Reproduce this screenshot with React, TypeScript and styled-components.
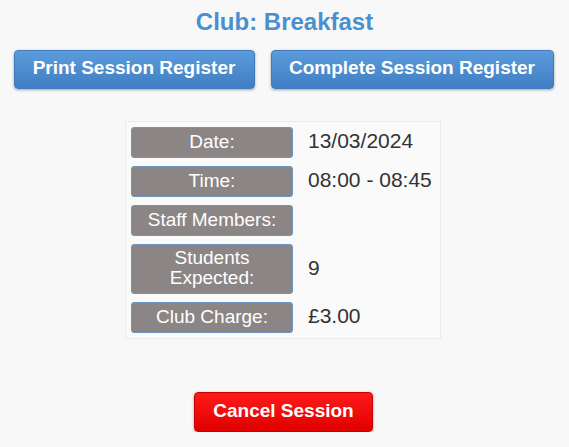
import React from "react";
import styled, { createGlobalStyle } from "styled-components";

const Global = createGlobalStyle`
  html, body { margin: 0; padding: 0; background: #f8f8f8; }
  body { font-family: "Liberation Sans", Arial, sans-serif; }
`;

const Page = styled.div`
  display: flex;
  flex-direction: column;
  align-items: center;
  padding-top: 8px;
`;

const Title = styled.h1`
  margin: 0;
  font-size: 24px;
  line-height: 28px;
  font-weight: bold;
  color: #4a8fd0;
`;

const ButtonRow = styled.div`
  display: flex;
  gap: 16px;
  margin-top: 14px;
  margin-left: -2px;
`;

const Button = styled.button<{ $variant?: "blue" | "red"; $w: number }>`
  width: ${(p) => p.$w}px;
  height: ${(p) => (p.$variant === "red" ? 40 : 39)}px;
  border-radius: 4px;
  border: 1px solid ${(p) => (p.$variant === "red" ? "#c80000" : "#3f7cbf")};
  background: ${(p) =>
    p.$variant === "red"
      ? "linear-gradient(#ff1a1a, #e00000)"
      : "linear-gradient(#5c9bdb, #3f7ec3)"};
  box-shadow: 0 1px 3px rgba(0, 0, 0, 0.35);
  color: #fff;
  font-family: "Liberation Sans", Arial, sans-serif;
  font-weight: bold;
  font-size: 19px;
  padding: 0 0 3px;
  cursor: pointer;
`;

const InfoBox = styled.div`
  margin-top: 32px;
  margin-left: -3px;
  width: 304px;
  border: 1px solid #ececec;
  background: #fafafa;
  padding: 5px;
  display: grid;
  grid-template-columns: 162px 1fr;
  column-gap: 15px;
  row-gap: 8px;
`;

const Label = styled.div`
  box-sizing: border-box;
  min-height: 31px;
  background: #8b8685;
  border: 1px solid #6e95c2;
  border-radius: 3px;
  color: #fff;
  font-size: 19px;
  line-height: 20px;
  text-align: center;
  display: flex;
  align-items: center;
  justify-content: center;
  padding: 3px 2px 5px;
`;

const Value = styled.div`
  display: flex;
  align-items: center;
  font-size: 21px;
  color: #333;
  padding-bottom: 3px;
`;

const CancelWrap = styled.div`
  margin-top: 53px;
  margin-left: -2px;
`;

const rows: [string, string][] = [
  ["Date:", "13/03/2024"],
  ["Time:", "08:00 - 08:45"],
  ["Staff Members:", ""],
  ["Students Expected:", "9"],
  ["Club Charge:", "£3.00"],
];

export default function App() {
  return (
    <>
      <Global />
      <Page>
        <Title>Club: Breakfast</Title>
        <ButtonRow>
          <Button $w={241}>Print Session Register</Button>
          <Button $w={283}>Complete Session Register</Button>
        </ButtonRow>
        <InfoBox>
          {rows.map(([l, v]) => (
            <React.Fragment key={l}>
              <Label>{l}</Label>
              <Value>{v}</Value>
            </React.Fragment>
          ))}
        </InfoBox>
        <CancelWrap>
          <Button $variant="red" $w={179}>Cancel Session</Button>
        </CancelWrap>
      </Page>
    </>
  );
}
